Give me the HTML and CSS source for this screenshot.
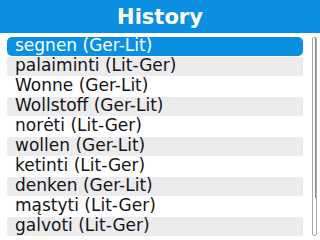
FILE: index.html
```html
<!DOCTYPE html>
<html>
<head>
<meta charset="utf-8">
<link rel="stylesheet" href="styles.css">
</head>
<body>
<div class="header">History</div>
<div class="content">
  <ul class="list">
    <li class="row selected">segnen (Ger-Lit)</li>
    <li class="row alt">palaiminti (Lit-Ger)</li>
    <li class="row">Wonne (Ger-Lit)</li>
    <li class="row alt">Wollstoff (Ger-Lit)</li>
    <li class="row">norėti (Lit-Ger)</li>
    <li class="row alt">wollen (Ger-Lit)</li>
    <li class="row">ketinti (Lit-Ger)</li>
    <li class="row alt">denken (Ger-Lit)</li>
    <li class="row">mąstyti (Lit-Ger)</li>
    <li class="row alt">galvoti (Lit-Ger)</li>
  </ul>
  <div class="scrollbar"><div class="thumb"></div></div>
</div>
</body>
</html>
```
FILE: styles.css
```css
html, body {
  margin: 0;
  padding: 0;
  background: #ffffff;
  width: 320px;
  height: 240px;
  overflow: hidden;
  font-family: "DejaVu Sans", Verdana, sans-serif;
}
.header {
  height: 33px;
  background: #0b8fe1;
  color: #ffffff;
  font-weight: bold;
  font-size: 21px;
  line-height: 34px;
  text-align: center;
}
.content {
  display: flex;
  padding-top: 4px;
  padding-left: 7px;
  gap: 9px;
}
.list {
  list-style: none;
  margin: 0;
  padding: 0;
  width: 296px;
}
.row {
  height: 19px;
  margin-bottom: 1px;
  padding-left: 8px;
  font-size: 17px;
  line-height: 17px;
  color: #141414;
  border-radius: 3px;
  box-sizing: border-box;
  white-space: nowrap;
}
.row.alt {
  background: #ecebee;
  border-right: 1px solid #e2e0e4;
}
.row.selected {
  background: #0b8fe1;
  color: #ffffff;
  border-radius: 5px;
}
.scrollbar {
  width: 5px;
  height: 199px;
  border: 1px solid #a9a9a9;
  border-radius: 2px;
  box-sizing: border-box;
  display: flex;
  justify-content: flex-end;
}
.thumb {
  width: 1px;
  height: 160px;
  background: #8a8a8a;
}
```
